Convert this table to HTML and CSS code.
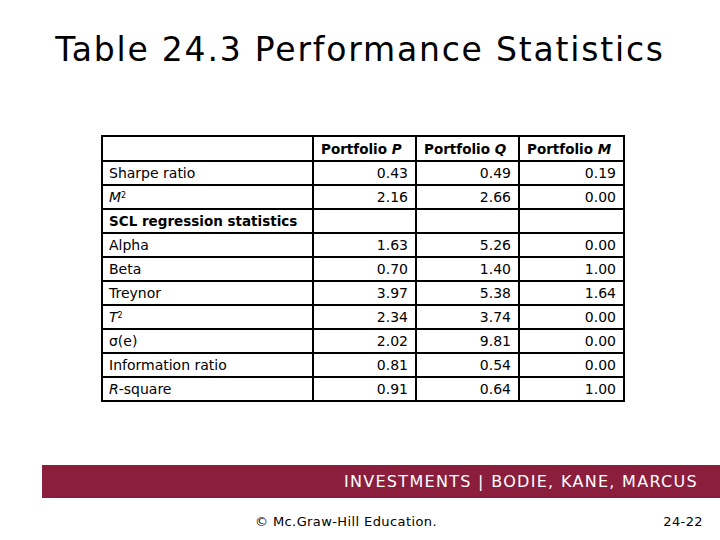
FILE: index.html
```html
<!DOCTYPE html>
<html>
<head>
<meta charset="utf-8">
<link rel="stylesheet" href="styles.css">
</head>
<body>
<div class="slide">
  <h1 class="title">Table 24.3 Performance Statistics</h1>
  <div class="table-wrap">
    <table class="stats">
      <colgroup>
        <col class="c-label"><col class="c-num"><col class="c-num"><col class="c-num3">
      </colgroup>
      <thead>
        <tr><th></th><th>Portfolio <i>P</i></th><th>Portfolio <i>Q</i></th><th>Portfolio <i>M</i></th></tr>
      </thead>
      <tbody>
        <tr><td>Sharpe ratio</td><td>0.43</td><td>0.49</td><td>0.19</td></tr>
        <tr><td><i>M</i><sup>2</sup></td><td>2.16</td><td>2.66</td><td>0.00</td></tr>
        <tr class="section"><td>SCL regression statistics</td><td></td><td></td><td></td></tr>
        <tr><td>Alpha</td><td>1.63</td><td>5.26</td><td>0.00</td></tr>
        <tr><td>Beta</td><td>0.70</td><td>1.40</td><td>1.00</td></tr>
        <tr><td>Treynor</td><td>3.97</td><td>5.38</td><td>1.64</td></tr>
        <tr><td><i>T</i><sup>2</sup></td><td>2.34</td><td>3.74</td><td>0.00</td></tr>
        <tr><td>σ(e)</td><td>2.02</td><td>9.81</td><td>0.00</td></tr>
        <tr><td>Information ratio</td><td>0.81</td><td>0.54</td><td>0.00</td></tr>
        <tr><td><i>R</i>-square</td><td>0.91</td><td>0.64</td><td>1.00</td></tr>
      </tbody>
    </table>
  </div>
  <div class="footer-bar">
    <span class="brand">INVESTMENTS | BODIE, KANE, MARCUS</span>
  </div>
  <div class="footer-meta">
    <span class="copy">© Mc.Graw-Hill Education.</span>
    <span class="page">24-22</span>
  </div>
</div>
</body>
</html>
```

FILE: styles.css
```css
html, body {
  margin: 0;
  padding: 0;
  background: #ffffff;
}
.slide {
  width: 720px;
  height: 540px;
  display: flex;
  flex-direction: column;
  font-family: "DejaVu Sans", Verdana, sans-serif;
  color: #000;
}
.slide > * {
  flex-shrink: 0;
}
.title {
  margin: 0;
  padding-top: 28px;
  height: 44px;
  font-weight: normal;
  font-size: 33px;
  letter-spacing: 1.8px;
  line-height: 44px;
  text-align: center;
  font-family: "DejaVu Sans", sans-serif;
}
.table-wrap {
  padding-top: 63px;
  padding-left: 101px;
  height: 330px;
}
.stats {
  border-collapse: collapse;
  font-size: 14px;
  table-layout: fixed;
  width: 523px;
}
.c-label { width: 211px; }
.c-num { width: 103px; }
.c-num3 { width: 105px; }
.stats th, .stats td {
  border: 2px solid #000;
  height: 22px;
  padding: 0 7px;
  line-height: 20px;
}
.stats th {
  font-weight: bold;
  text-align: left;
  height: 23px;
  font-size: 13.5px;
}
.stats td {
  text-align: right;
}
.stats td:first-child {
  text-align: left;
  padding-left: 6px;
}
.stats sup {
  font-size: 8px;
  vertical-align: 4px;
  line-height: 0;
}
.section td:first-child {
  font-weight: bold;
  font-size: 13.5px;
}
.footer-bar {
  margin-left: 42px;
  height: 33px;
  background: #8c1e3d;
  display: flex;
  justify-content: flex-end;
  align-items: center;
  padding-right: 22px;
}
.brand {
  color: #fff;
  font-size: 16px;
  letter-spacing: 1.3px;
  font-family: "DejaVu Sans", sans-serif;
}
.footer-meta {
  display: flex;
  align-items: center;
  height: 46px;
  font-size: 13px;
  letter-spacing: 0.4px;
  font-family: "DejaVu Sans", sans-serif;
}
.copy {
  margin-left: 255px;
}
.page {
  margin-left: auto;
  margin-right: 17px;
}
```
